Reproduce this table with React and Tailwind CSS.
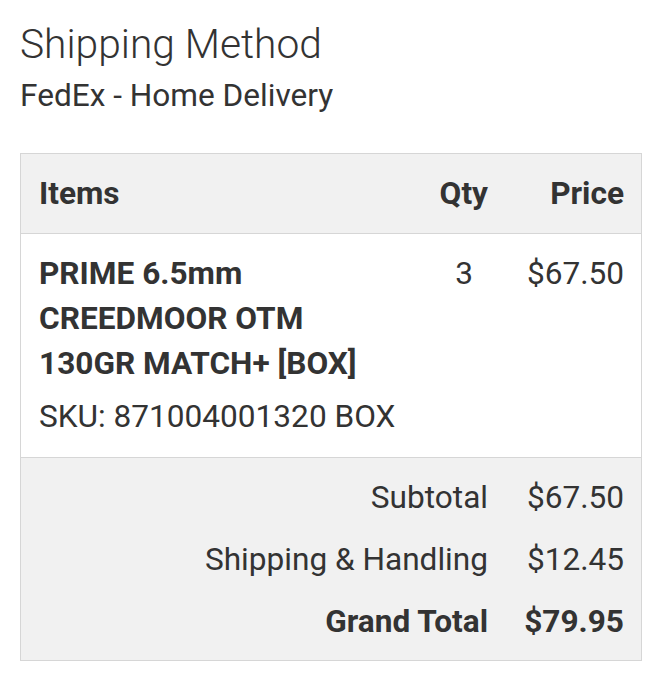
import React from "react";

const item = {
  name: "PRIME 6.5mm CREEDMOOR OTM 130GR MATCH+ [BOX]",
  sku: "871004001320 BOX",
  qty: 3,
  price: "$67.50",
};

const totals = [
  { label: "Subtotal", value: "$67.50" },
  { label: "Shipping & Handling", value: "$12.45" },
  { label: "Grand Total", value: "$79.95", strong: true },
];

export default function App() {
  return (
    <div className="bg-white min-h-screen px-5 pt-[18px] text-[#333] font-['Roboto',sans-serif]">
      <h2 className="text-[40.7px] font-light leading-[52px]">Shipping Method</h2>
      <p className="text-[31.6px] leading-[40px] mt-[6px]">FedEx - Home Delivery</p>

      <div className="mt-[37px] w-[622px] border border-[#d6d6d6]">
        {/* Header */}
        <div className="grid grid-cols-[1fr_80px_153px] bg-[#f1f1f1] border-b border-[#d6d6d6] py-[17px] text-[31.6px] font-bold leading-[45px]">
          <div className="pl-[18px]">Items</div>
          <div className="text-right">Qty</div>
          <div className="text-right pr-[17px]">Price</div>
        </div>

        {/* Item row */}
        <div className="grid grid-cols-[1fr_80px_153px] pt-[17px] pb-[18px] text-[31.6px] leading-[45px]">
          <div className="pl-[18px]">
            <div className="font-bold w-[340px]">{item.name}</div>
            <div className="mt-[8px]">SKU: {item.sku}</div>
          </div>
          <div className="text-right pr-[15px]">{item.qty}</div>
          <div className="text-right pr-[17px]">{item.price}</div>
        </div>

        {/* Totals */}
        <div className="bg-[#f1f1f1] border-t border-[#d6d6d6] py-[8px] text-[31.6px] leading-[45px]">
          {totals.map((t) => (
            <div
              key={t.label}
              className={`grid grid-cols-[1fr_153px] py-[8.5px] ${t.strong ? "font-bold" : ""}`}
            >
              <div className="text-right">{t.label}</div>
              <div className="text-right pr-[17px]">{t.value}</div>
            </div>
          ))}
        </div>
      </div>
    </div>
  );
}
